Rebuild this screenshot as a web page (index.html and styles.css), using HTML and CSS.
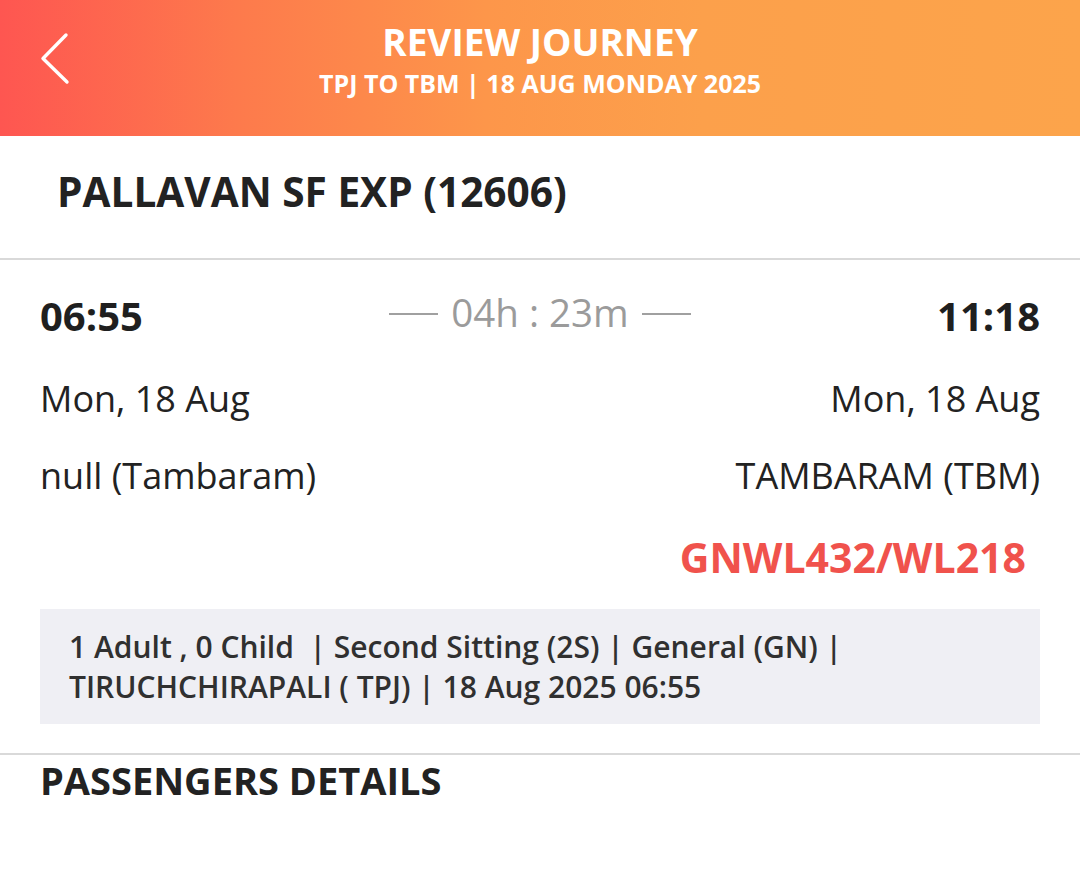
FILE: index.html
```html
<!DOCTYPE html>
<html lang="en">
<head>
<meta charset="utf-8">
<title>Review Journey</title>
<link rel="stylesheet" href="styles.css">
</head>
<body>
<div class="page">
  <header class="topbar">
    <div class="back">
      <svg class="back-icon" width="34" height="54" viewBox="0 0 34 54" aria-hidden="true">
        <path d="M28 3 L5 26.5 L29 50" fill="none" stroke="#ffffff" stroke-width="3.4" stroke-linecap="round" stroke-linejoin="round"/>
      </svg>
    </div>
    <div class="titles">
      <div class="title">REVIEW JOURNEY</div>
      <div class="subtitle">TPJ TO TBM | 18 AUG MONDAY 2025</div>
    </div>
    <div></div>
  </header>

  <section class="train">
    <h1 class="train-name">PALLAVAN SF EXP (12606)</h1>
  </section>

  <section class="journey">
    <div class="row times">
      <div class="time">06:55</div>
      <div class="duration">
        <span class="dash"></span>
        <span class="dur-text">04h : 23m</span>
        <span class="dash"></span>
      </div>
      <div class="time right">11:18</div>
    </div>
    <div class="row info">
      <div>Mon, 18 Aug</div>
      <div class="right">Mon, 18 Aug</div>
    </div>
    <div class="row info">
      <div>null (Tambaram)</div>
      <div class="right">TAMBARAM (TBM)</div>
    </div>
    <div class="status">GNWL432/WL218</div>
    <div class="summary">
      1 Adult , 0 Child &nbsp;| Second Sitting (2S) | General (GN) |<br>
      TIRUCHCHIRAPALI ( TPJ) | 18 Aug 2025 06:55
    </div>
  </section>

  <section class="passengers">
    <h2 class="section-title">PASSENGERS DETAILS</h2>
  </section>
</div>
</body>
</html>
```

FILE: styles.css
```css
* {
  box-sizing: border-box;
}

html, body {
  margin: 0;
  padding: 0;
  background: #ffffff;
}

body {
  font-family: "Open Sans", "Noto Sans", "Liberation Sans", sans-serif;
  color: #222222;
}

.page {
  width: 1080px;
  min-height: 873px;
  background: #ffffff;
}

.topbar {
  height: 136px;
  display: grid;
  grid-template-columns: 1fr auto 1fr;
  align-items: start;
  background: linear-gradient(90deg, #fe5651 0%, #fd7a4c 22%, #fd964a 45%, #fca04b 65%, #fca44b 100%);
  color: #ffffff;
}

.back {
  padding-left: 38px;
  padding-top: 32px;
}

.back-icon {
  display: block;
}

.titles {
  padding-top: 19px;
  text-align: center;
}

.title {
  font-size: 37px;
  font-weight: 700;
  line-height: 46px;
}

.subtitle {
  margin-top: 1px;
  font-size: 25px;
  font-weight: 700;
  line-height: 34px;
}

.train {
  height: 124px;
  border-bottom: 2px solid #d9d9d9;
  padding-left: 57px;
}

.train-name {
  margin: 0;
  font-size: 40.6px;
  font-weight: 700;
  line-height: 112px;
  color: #222222;
}

.journey {
  padding: 26px 40px 29px 40px;
  border-bottom: 2px solid #d9d9d9;
}

.row {
  display: grid;
  grid-template-columns: 1fr auto 1fr;
}

.row.info {
  grid-template-columns: 1fr 1fr;
  font-size: 36px;
  line-height: 77px;
  color: #222222;
}

.times {
  font-size: 40px;
  line-height: 60px;
  align-items: center;
}

.time {
  font-weight: 700;
  color: #1f1f1f;
}

.right {
  text-align: right;
}

.duration {
  display: flex;
  align-items: center;
  gap: 13px;
  color: #9b9b9b;
  font-size: 38.5px;
  line-height: 60px;
  margin-top: -8px;
}

.dash {
  display: block;
  width: 49px;
  height: 2px;
  background: #a0a0a0;
  margin-top: 4px;
}

.times + .row.info {
  margin-top: 14px;
}

.status {
  margin-top: 13px;
  margin-right: 14px;
  text-align: right;
  font-size: 41px;
  font-weight: 700;
  line-height: 60px;
  color: #f0524c;
}

.summary {
  margin-top: 22px;
  background: #efeff4;
  padding: 18px 20px 17px 29px;
  font-size: 30px;
  font-weight: 600;
  line-height: 40px;
  color: #303030;
}

.passengers {
  padding: 0 40px;
}

.section-title {
  margin: 0;
  font-size: 38px;
  font-weight: 700;
  line-height: 50px;
  color: #222222;
}
```
